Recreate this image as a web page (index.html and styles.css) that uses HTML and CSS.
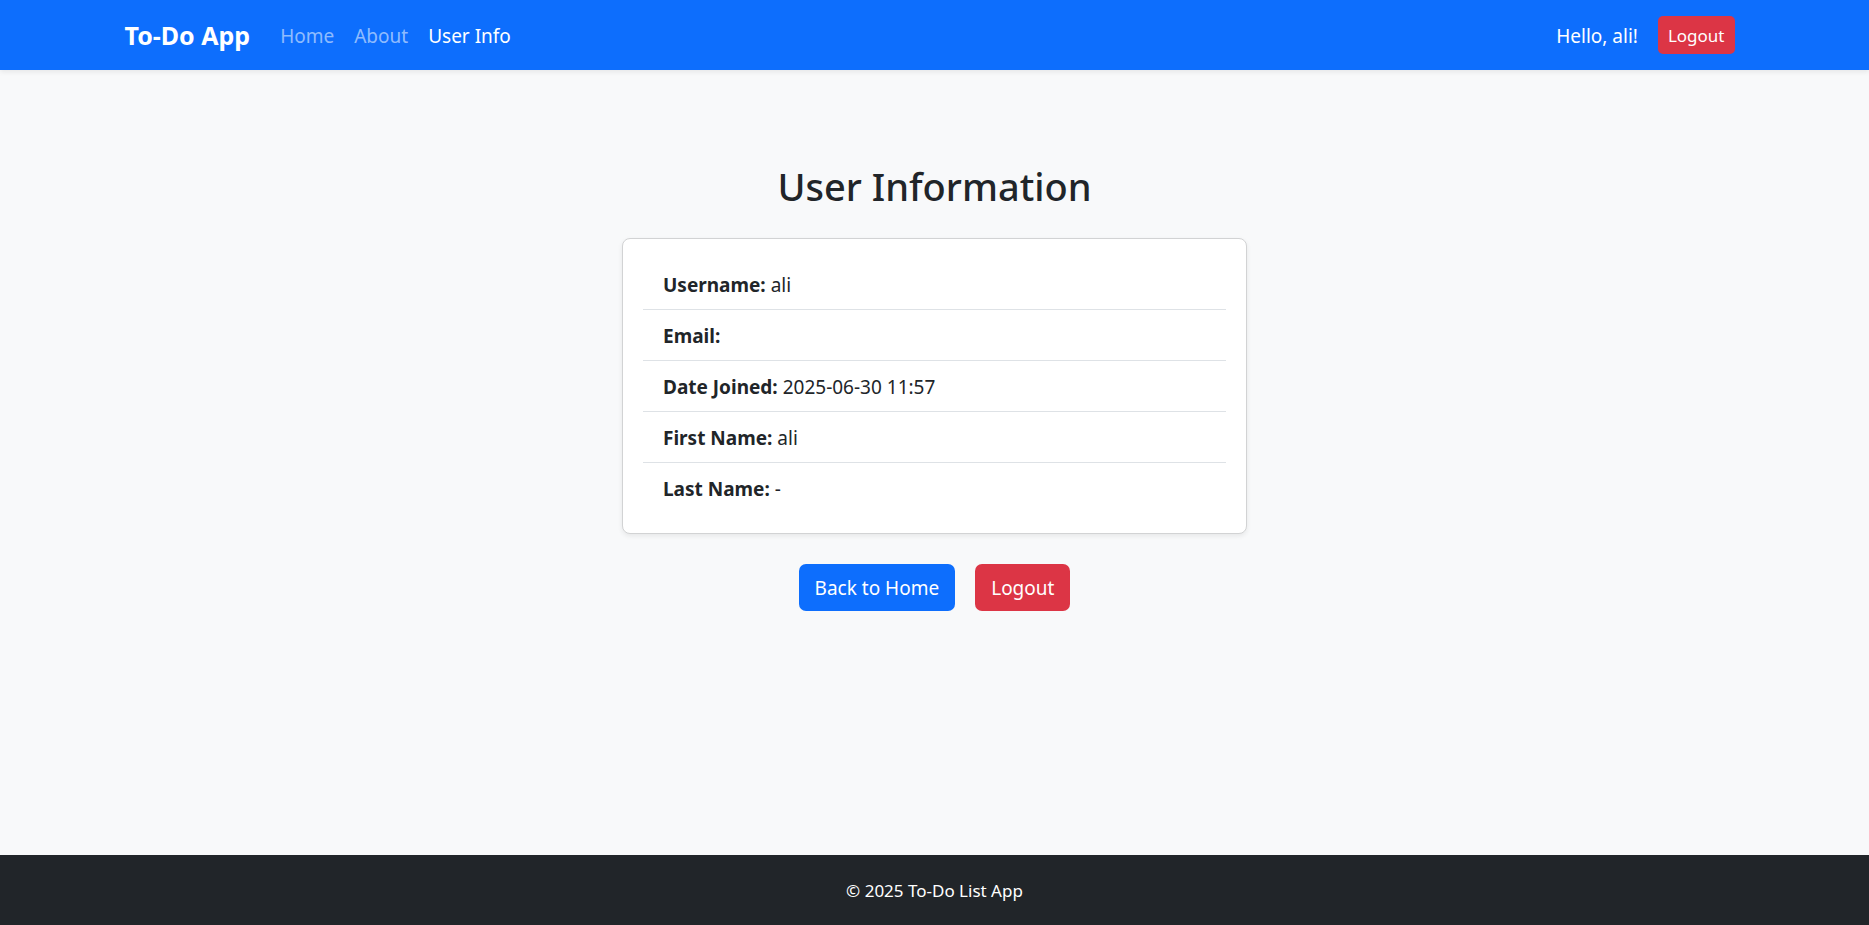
FILE: index.html
```html
<!DOCTYPE html>
<html lang="en">
<head>
<meta charset="utf-8">
<title>User Information</title>
<link rel="stylesheet" href="styles.css">
</head>
<body>
<header class="navbar">
  <div class="container">
    <a class="brand" href="#">To-Do App</a>
    <nav class="nav">
      <a class="nav-link" href="#">Home</a>
      <a class="nav-link" href="#">About</a>
      <a class="nav-link active" href="#" aria-current="page">User Info</a>
    </nav>
    <div class="account">
      <span class="greeting">Hello, ali!</span>
      <button class="btn btn-danger btn-sm" type="button">Logout</button>
    </div>
  </div>
</header>
<main class="main">
  <h1 class="title">User Information</h1>
  <section class="card">
    <ul class="list">
      <li class="item"><strong>Username:</strong> ali</li>
      <li class="item"><strong>Email:</strong></li>
      <li class="item"><strong>Date Joined:</strong> 2025-06-30 11:57</li>
      <li class="item"><strong>First Name:</strong> ali</li>
      <li class="item"><strong>Last Name:</strong> -</li>
    </ul>
  </section>
  <div class="actions">
    <a class="btn btn-primary" href="#">Back to Home</a>
    <button class="btn btn-danger" type="button">Logout</button>
  </div>
</main>
<footer class="footer">© 2025 To-Do List App</footer>
</body>
</html>
```
FILE: styles.css
```css
* {
  box-sizing: border-box;
}

body {
  margin: 0;
  min-height: 100vh;
  display: flex;
  flex-direction: column;
  background: #f8f9fa;
  color: #212529;
  font-family: "Segoe UI", "Noto Sans", sans-serif;
  font-size: 19px;
  line-height: 30px;
}

a {
  text-decoration: none;
}

.navbar {
  background: #0d6efd;
  padding: 10px 0;
  box-shadow: 0 2px 5px rgba(0, 0, 0, 0.075);
}

.container {
  max-width: 1650px;
  min-height: 50px;
  margin: 0 auto;
  padding: 0 15px;
  display: flex;
  align-items: center;
}

.brand {
  margin-right: 20px;
  color: #fff;
  font-size: 25px;
  font-weight: 700;
}

.nav {
  display: flex;
}

.nav-link {
  padding: 11px 10px 9px;
  color: rgba(255, 255, 255, 0.55);
}

.nav-link.active,
.greeting {
  color: #fff;
}

.account {
  margin-left: auto;
  padding-right: 10px;
  display: flex;
  align-items: center;
  gap: 20px;
}

.greeting {
  padding-top: 2px;
}

.btn {
  padding: 9px 16px 7px;
  border: 0;
  border-radius: 7px;
  color: #fff;
  font: inherit;
  line-height: 31px;
  cursor: pointer;
}

.btn-sm {
  padding: 7px 10px 5px;
  border-radius: 5px;
  font-size: 17px;
  line-height: 26px;
}

.btn-primary {
  background: #0d6efd;
}

.btn-danger {
  background: #dc3545;
}

.main {
  flex: 1;
  padding: 91px 16px 0;
  display: flex;
  flex-direction: column;
  align-items: center;
}

.title {
  margin: 0 0 27px;
  font-size: 38px;
  font-weight: 500;
  line-height: 50px;
}

.card {
  width: 100%;
  max-width: 625px;
  padding: 20px;
  border: 1px solid #d2d3d4;
  border-radius: 8px;
  background: #fff;
  box-shadow: 0 2px 5px rgba(0, 0, 0, 0.075);
}

.list {
  margin: 0;
  padding: 0;
  list-style: none;
}

.item {
  padding: 11px 20px 9px;
  border-bottom: 1px solid #dee2e6;
}

.item:last-child {
  border-bottom: 0;
}

.actions {
  margin-top: 30px;
  display: flex;
  gap: 20px;
}

.footer {
  padding: 21px 0 19px;
  background: #212529;
  color: #fff;
  font-size: 17px;
  text-align: center;
}
```
